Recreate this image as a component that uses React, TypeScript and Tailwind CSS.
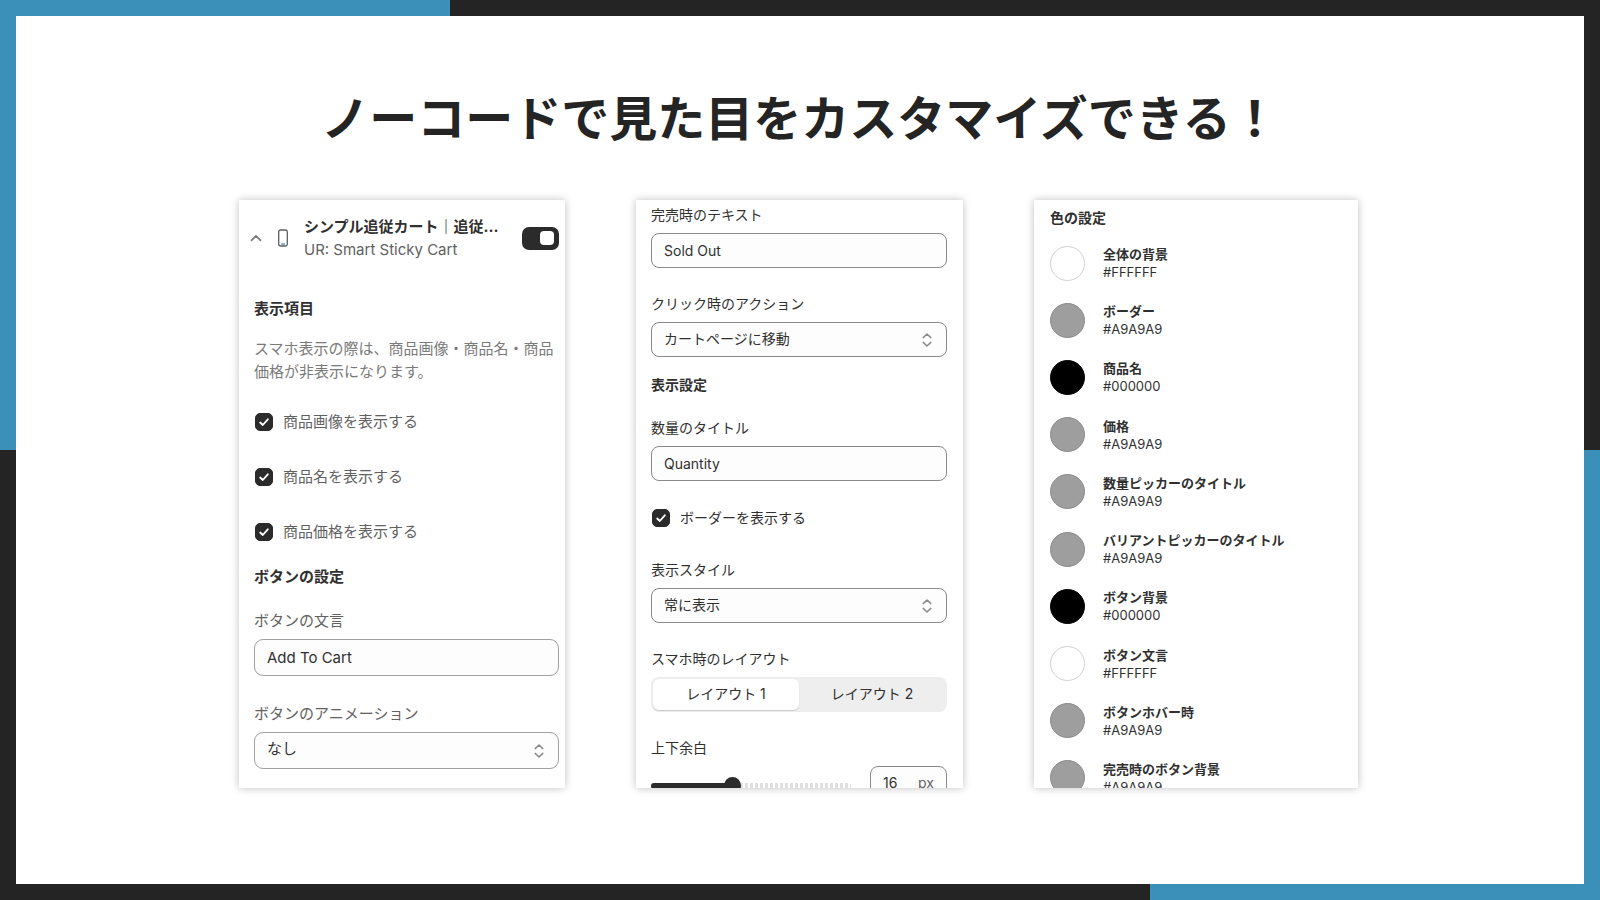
import type { ReactNode } from 'react';

type ColorSetting = {
  name: string;
  hex: string;
  swatch: string;
};

const colorSettings: ColorSetting[] = [
  { name: '全体の背景', hex: '#FFFFFF', swatch: 'bg-white border-[#d0d0d0]' },
  { name: 'ボーダー', hex: '#A9A9A9', swatch: 'bg-[#9e9e9e] border-[#8b8b8b]' },
  { name: '商品名', hex: '#000000', swatch: 'bg-black border-black' },
  { name: '価格', hex: '#A9A9A9', swatch: 'bg-[#9e9e9e] border-[#8b8b8b]' },
  { name: '数量ピッカーのタイトル', hex: '#A9A9A9', swatch: 'bg-[#9e9e9e] border-[#8b8b8b]' },
  { name: 'バリアントピッカーのタイトル', hex: '#A9A9A9', swatch: 'bg-[#9e9e9e] border-[#8b8b8b]' },
  { name: 'ボタン背景', hex: '#000000', swatch: 'bg-black border-black' },
  { name: 'ボタン文言', hex: '#FFFFFF', swatch: 'bg-white border-[#d0d0d0]' },
  { name: 'ボタンホバー時', hex: '#A9A9A9', swatch: 'bg-[#9e9e9e] border-[#8b8b8b]' },
  { name: '完売時のボタン背景', hex: '#A9A9A9', swatch: 'bg-[#9e9e9e] border-[#8b8b8b]' },
];

const displayItems = [
  { id: 'show-image', label: '商品画像を表示する' },
  { id: 'show-name', label: '商品名を表示する' },
  { id: 'show-price', label: '商品価格を表示する' },
];

function Panel({ className, children }: { className: string; children: ReactNode }) {
  return (
    <section className={`h-[588px] overflow-hidden bg-white shadow-[0_0_8px_rgba(0,0,0,0.25)] ${className}`}>
      {children}
    </section>
  );
}

function Checkbox({ id, label }: { id: string; label: string }) {
  return (
    <div className="flex h-5 items-center gap-[10px]">
      <span className="relative ml-px size-[18px] shrink-0">
        <input
          id={id}
          type="checkbox"
          defaultChecked
          className="peer block size-[18px] appearance-none rounded-[5px] border border-[#2b2b2b] checked:bg-[#2b2b2b]"
        />
        <svg
          viewBox="0 0 18 18"
          fill="none"
          stroke="white"
          strokeWidth="1.8"
          strokeLinecap="round"
          strokeLinejoin="round"
          className="pointer-events-none absolute inset-0 hidden peer-checked:block"
        >
          <path d="M5.2 9.5 7.8 12 12.8 6.3" />
        </svg>
      </span>
      <label htmlFor={id}>{label}</label>
    </div>
  );
}

function TextField({ id, label, value, box }: { id: string; label: string; value: string; box: string }) {
  return (
    <div className="flex flex-col gap-2">
      <label htmlFor={id} className="leading-5">
        {label}
      </label>
      <input
        id={id}
        type="text"
        defaultValue={value}
        className={`w-full border bg-[#fdfdfd] px-3 text-[#303030] ${box}`}
      />
    </div>
  );
}

function SelectField({ id, label, value, box }: { id: string; label: string; value: string; box: string }) {
  return (
    <div className="flex flex-col gap-2">
      <label htmlFor={id} className="leading-5">
        {label}
      </label>
      <div className="relative">
        <select id={id} className={`block w-full appearance-none border bg-[#fdfdfd] px-3 pb-[2px] text-[#303030] ${box}`}>
          <option>{value}</option>
        </select>
        <svg
          viewBox="0 0 10 16"
          fill="none"
          stroke="#8a8a8a"
          strokeWidth="1.5"
          strokeLinecap="round"
          strokeLinejoin="round"
          className="pointer-events-none absolute inset-y-0 right-[15px] my-auto h-4 w-[10px]"
        >
          <path d="M1.2 5.6 5 2l3.8 3.6M1.2 10.4 5 14l3.8-3.6" />
        </svg>
      </div>
    </div>
  );
}

function CartPanel() {
  const box = 'h-[37px] rounded-[9px] border-[#a0a0a0]';
  return (
    <Panel className="pt-[15px] pr-[6px] pl-[15px] text-[15px] text-[#616161]">
      <header className="flex h-[46px] items-center">
        <button type="button" aria-label="閉じる" className="-ml-1 flex w-3 justify-center">
          <svg viewBox="0 0 12 8" fill="none" stroke="#7a7a7a" strokeWidth="1.7" strokeLinecap="round" strokeLinejoin="round" className="h-2 w-3">
            <path d="M1.5 6.3 6 1.8l4.5 4.5" />
          </svg>
        </button>
        <svg viewBox="0 0 12 18" fill="none" className="ml-[15px] h-[18px] w-3 shrink-0">
          <rect x="1.7" y="1" width="8.6" height="16" rx="1.8" stroke="#5c5f62" strokeWidth="1.3" />
          <path d="M4.2 15h3.8" stroke="#3f8fc4" strokeWidth="1.3" />
        </svg>
        <div className="ml-[15px] min-w-0 flex-1 leading-[23px]">
          <h2 className="truncate font-bold text-[#303030]">シンプル追従カート｜追従…</h2>
          <p>UR: Smart Sticky Cart</p>
        </div>
        <button
          type="button"
          role="switch"
          aria-checked="true"
          aria-label="シンプル追従カート"
          className="flex h-[23px] w-[37px] shrink-0 items-center justify-end rounded-[7px] bg-[#2b2b2b] pr-[5px]"
        >
          <span className="size-[14px] rounded bg-white" />
        </button>
      </header>

      <h3 className="mt-[38px] leading-5 font-bold text-[#303030]">表示項目</h3>
      <p className="mt-[18px] leading-[23px] text-[#7a7a7a]">
        スマホ表示の際は、商品画像・商品名・商品価格が非表示になります。
      </p>
      <div className="mt-[29px] flex flex-col gap-[35px]">
        {displayItems.map((item) => (
          <Checkbox key={item.id} id={item.id} label={item.label} />
        ))}
      </div>
      <h3 className="mt-[25px] leading-5 font-bold text-[#303030]">ボタンの設定</h3>
      <div className="mt-6 flex flex-col gap-7">
        <TextField id="button-text" label="ボタンの文言" value="Add To Cart" box={box} />
        <SelectField id="button-animation" label="ボタンのアニメーション" value="なし" box={box} />
      </div>
    </Panel>
  );
}

function DisplayPanel() {
  const box = 'h-[35px] rounded-lg border-[#8a8a8a]';
  return (
    <Panel className="pt-[5px] pr-4 pl-[15px] text-sm text-[#303030]">
      <div className="flex flex-col gap-[26px]">
        <TextField id="sold-out" label="完売時のテキスト" value="Sold Out" box={box} />
        <SelectField id="click-action" label="クリック時のアクション" value="カートページに移動" box={box} />
      </div>
      <h3 className="mt-[18px] mb-[23px] leading-5 font-bold">表示設定</h3>
      <TextField id="quantity-title" label="数量のタイトル" value="Quantity" box={box} />
      <div className="mt-[27px] mb-8">
        <Checkbox id="show-border" label="ボーダーを表示する" />
      </div>
      <div className="flex flex-col gap-[26px]">
        <SelectField id="display-style" label="表示スタイル" value="常に表示" box={box} />
        <div className="flex flex-col gap-2">
          <span id="sp-layout" className="leading-5">
            スマホ時のレイアウト
          </span>
          <div role="group" aria-labelledby="sp-layout" className="grid h-[35px] grid-cols-2 rounded-lg bg-[#eeeeee] p-[2px]">
            <button type="button" aria-pressed="true" className="rounded-md bg-white pb-[2px] shadow-[0_1px_1px_rgba(0,0,0,0.15)]">
              レイアウト 1
            </button>
            <button type="button" aria-pressed="false" className="rounded-md pb-[2px]">
              レイアウト 2
            </button>
          </div>
        </div>
        <div className="flex flex-col gap-2">
          <label htmlFor="padding-range" className="leading-5">
            上下余白
          </label>
          <div className="flex items-center justify-between">
            <div className="relative mt-1 flex h-[17px] w-[200px] items-center">
              <div className="flex h-[6px] flex-1 overflow-hidden rounded-[3px]">
                <div className="w-[82px] bg-[#2b2b2b]" />
                <div className="flex-1 bg-[repeating-linear-gradient(90deg,#ffffff_0_2px,#e0e0e0_2px_5px)]" />
              </div>
              <input
                id="padding-range"
                type="range"
                min={0}
                max={40}
                defaultValue={16}
                className="absolute inset-0 w-full appearance-none bg-transparent [&::-webkit-slider-thumb]:size-[17px] [&::-webkit-slider-thumb]:appearance-none [&::-webkit-slider-thumb]:rounded-full [&::-webkit-slider-thumb]:bg-[#2b2b2b]"
              />
            </div>
            <div className="flex h-[35px] w-[77px] items-center justify-between rounded-lg border border-[#8a8a8a] bg-[#fdfdfd] px-3 pb-[2px]">
              <input type="text" aria-label="上下余白" defaultValue="16" className="w-6" />
              <span className="text-[#616161]">px</span>
            </div>
          </div>
        </div>
      </div>
    </Panel>
  );
}

function ColorPanel() {
  return (
    <Panel className="px-4 pt-2 text-[13px] text-[#303030]">
      <h3 className="text-sm leading-5 font-bold">色の設定</h3>
      <ul className="mt-[17px] flex h-[551px] flex-col justify-between">
        {colorSettings.map((color) => (
          <li key={color.name} className="flex h-9 items-center gap-[18px]">
            <button
              type="button"
              aria-label={color.name}
              className={`size-[35px] shrink-0 rounded-full border ${color.swatch}`}
            />
            <div className="leading-[18px]">
              <p className="font-bold">{color.name}</p>
              <p>{color.hex}</p>
            </div>
          </li>
        ))}
      </ul>
    </Panel>
  );
}

export default function App() {
  return (
    <div className="flex min-h-screen flex-col bg-[#242424] bg-[linear-gradient(#3b90ba,#3b90ba),linear-gradient(#3b90ba,#3b90ba)] bg-[length:450px_450px] bg-[position:left_top,right_bottom] bg-no-repeat p-4 font-['Inter','Noto_Sans_CJK_JP',sans-serif]">
      <main className="flex flex-1 flex-col items-center bg-white pt-16 pb-8">
        <h1 className="text-center font-['Noto_Sans_CJK_JP',sans-serif] text-5xl leading-[70px] font-bold text-[#242424]">
          ノーコードで見た目をカスタマイズできる！
        </h1>
        <div className="mt-[50px] grid w-full max-w-[1122px] grid-cols-[326fr_327fr_324fr] gap-[71px] pr-[3px]">
          <CartPanel />
          <DisplayPanel />
          <ColorPanel />
        </div>
      </main>
    </div>
  );
}
